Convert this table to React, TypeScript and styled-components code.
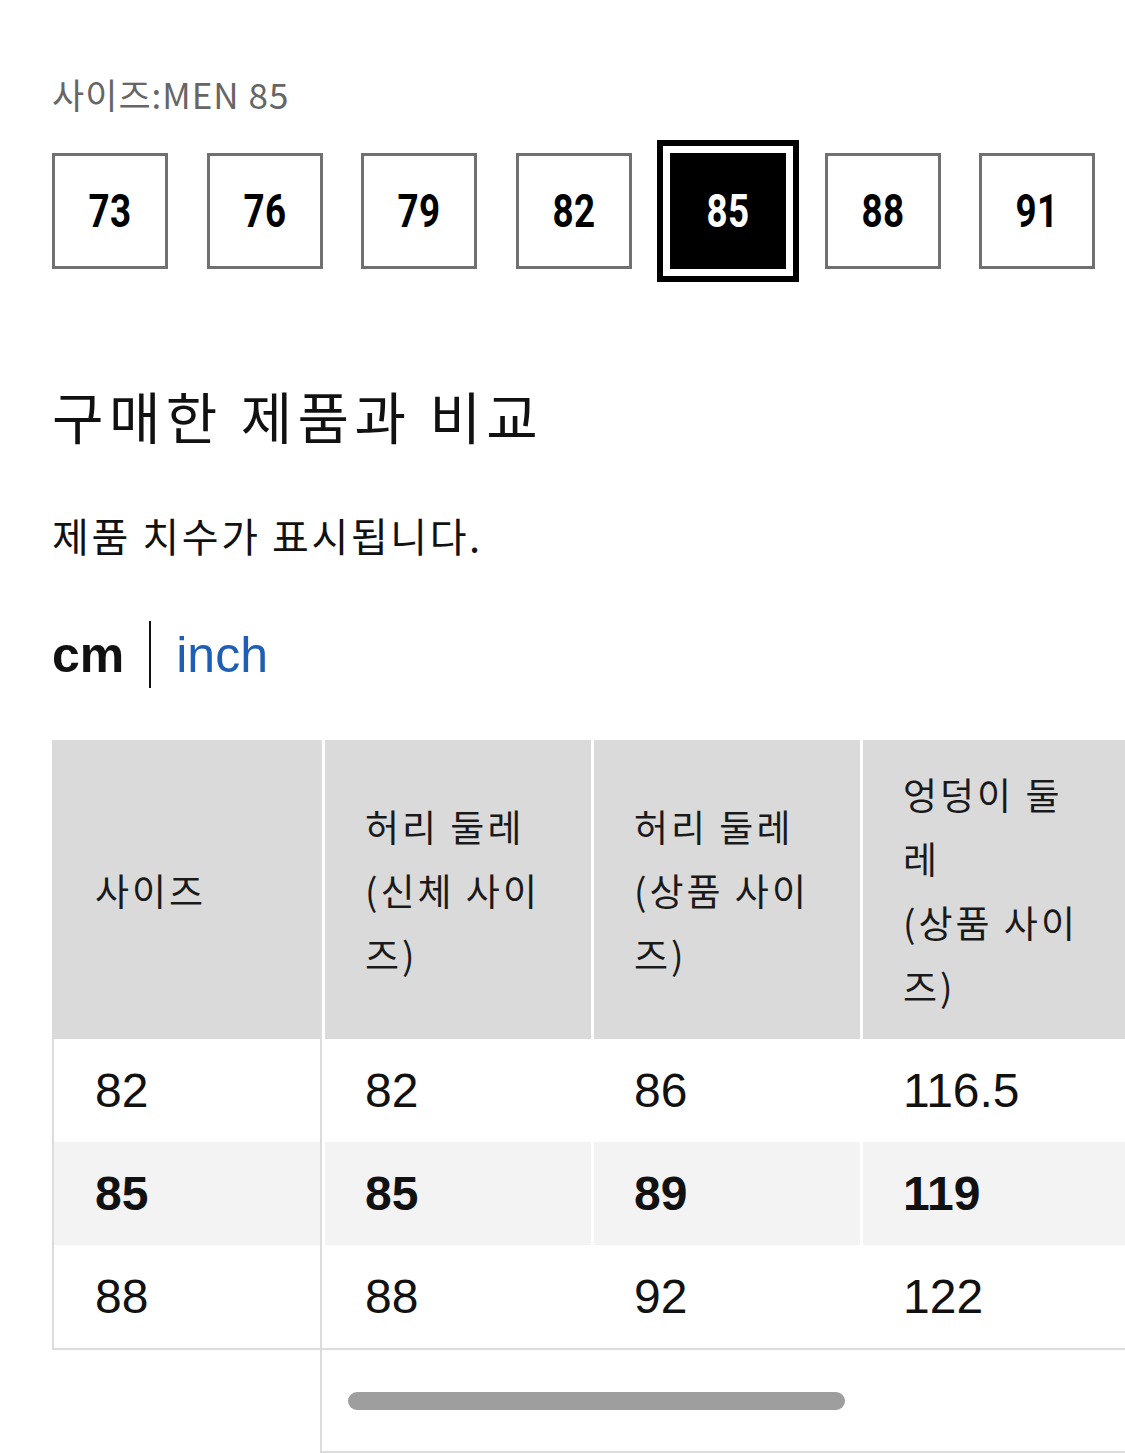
import React from "react";
import styled, { createGlobalStyle } from "styled-components";

const Global = createGlobalStyle`
  html, body {
    margin: 0;
    padding: 0;
    background: #ffffff;
    overflow-x: hidden;
  }
  body {
    font-family: "Noto Sans CJK KR", "Noto Sans", sans-serif;
    color: #111111;
  }
`;

const KR = `"Noto Sans CJK KR", "Noto Sans", sans-serif`;
const LATIN = `"Liberation Sans", Arial, sans-serif`;

const Page = styled.div`
  padding: 74px 0 0 52px;
  box-sizing: border-box;
  width: 100%;
`;

const SizeLabel = styled.div`
  font-family: ${KR};
  font-size: 35px;
  line-height: 40px;
  letter-spacing: 1px;
  color: #666666;
  font-weight: 400;
`;

const SizeRow = styled.div`
  margin-top: 39px;
  width: 1043px;
  display: flex;
  justify-content: space-between;
`;

const SizeBox = styled.button<{ $active?: boolean }>`
  width: 116px;
  height: 116px;
  box-sizing: border-box;
  border: 3px solid ${(p) => (p.$active ? "#000000" : "#707070")};
  background: ${(p) => (p.$active ? "#000000" : "#ffffff")};
  color: ${(p) => (p.$active ? "#ffffff" : "#000000")};
  box-shadow: ${(p) =>
    p.$active ? "0 0 0 7px #ffffff, 0 0 0 13px #000000" : "none"};
  display: flex;
  align-items: center;
  justify-content: center;
  padding: 0;
  margin: 0;
  cursor: pointer;
`;

const SizeNum = styled.span`
  display: inline-block;
  font-family: Roboto, "Liberation Sans", sans-serif;
  font-weight: 700;
  font-size: 46px;
  line-height: 1;
  transform: scaleX(0.8);
  letter-spacing: 0.5px;
`;

const Heading = styled.h2`
  margin: 114px 0 0;
  font-family: ${KR};
  font-weight: 400;
  font-size: 56px;
  line-height: 64px;
  letter-spacing: 5.4px;
  color: #111111;
`;

const SubText = styled.p`
  margin: 64px 0 0;
  font-family: ${KR};
  font-weight: 400;
  font-size: 40px;
  line-height: 48px;
  letter-spacing: 2.6px;
  color: #111111;
`;

const UnitRow = styled.div`
  margin-top: 62px;
  height: 67px;
  display: flex;
  align-items: center;
  gap: 25px;
`;

const Unit = styled.span<{ $active?: boolean }>`
  font-family: ${LATIN};
  font-size: 50px;
  line-height: 1;
  font-weight: ${(p) => (p.$active ? 700 : 400)};
  color: ${(p) => (p.$active ? "#111111" : "#1c5fb4")};
  cursor: pointer;
`;

const UnitDivider = styled.span`
  width: 2px;
  height: 67px;
  background: #111111;
`;

const TableWrap = styled.div`
  margin-top: 52px;
  display: flex;
  align-items: flex-start;
  overflow: hidden;
`;

const FixedCol = styled.div`
  width: 268px;
  flex-shrink: 0;
  display: flex;
  flex-direction: column;
`;

const HeadCell = styled.div<{ $pad?: number }>`
  height: 299px;
  box-sizing: border-box;
  background: #dadada;
  padding: 0 42px 0 ${(p) => p.$pad ?? 40}px;
  display: flex;
  align-items: center;
  font-family: ${KR};
  font-size: 37px;
  line-height: 64px;
  letter-spacing: 3px;
  color: #1a1a1a;
`;

const BodyCell = styled.div<{ $alt?: boolean; $bold?: boolean; $edge?: boolean }>`
  height: 103px;
  box-sizing: border-box;
  background: ${(p) => (p.$alt ? "#f3f3f3" : "#ffffff")};
  border-left: ${(p) => (p.$edge ? "2px solid #dcdcdc" : "none")};
  padding-left: ${(p) => (p.$edge ? 41 : 40)}px;
  display: flex;
  align-items: center;
  font-family: ${LATIN};
  font-size: 48px;
  font-weight: ${(p) => (p.$bold ? 700 : 400)};
  color: #111111;
`;

const FixedBody = styled.div`
  border-bottom: 2px solid #dcdcdc;
  display: flex;
  flex-direction: column;
`;

const ScrollArea = styled.div`
  flex: 1;
  min-width: 0;
  border-left: 2px solid #dcdcdc;
  border-bottom: 2px solid #dcdcdc;
  overflow: hidden;
`;

const ScrollGrid = styled.div`
  display: grid;
  grid-template-columns: repeat(3, 266px);
  column-gap: 3px;
  padding-left: 3px;
  width: max-content;
  border-bottom: 2px solid #dcdcdc;
`;

const ScrollTrack = styled.div`
  height: 101px;
  padding-left: 26px;
  display: flex;
  align-items: center;
`;

const Thumb = styled.div`
  width: 497px;
  height: 18px;
  border-radius: 9px;
  background: #9e9e9e;
`;

const sizes = [73, 76, 79, 82, 85, 88, 91];

const headers: React.ReactNode[] = [
  <>허리 둘레<br />(신체 사이즈)</>,
  <>허리 둘레<br />(상품 사이즈)</>,
  <>엉덩이 둘레<br />(상품 사이즈)</>,
];

const rows = [
  { size: "82", values: ["82", "86", "116.5"], current: false },
  { size: "85", values: ["85", "89", "119"], current: true },
  { size: "88", values: ["88", "92", "122"], current: false },
];

export default function App() {
  return (
    <>
      <Global />
      <Page>
        <SizeLabel>사이즈:MEN 85</SizeLabel>
        <SizeRow>
          {sizes.map((s) => (
            <SizeBox key={s} $active={s === 85}>
              <SizeNum>{s}</SizeNum>
            </SizeBox>
          ))}
        </SizeRow>

        <Heading>구매한 제품과 비교</Heading>
        <SubText>제품 치수가 표시됩니다.</SubText>

        <UnitRow>
          <Unit $active>cm</Unit>
          <UnitDivider />
          <Unit>inch</Unit>
        </UnitRow>

        <TableWrap>
          <FixedCol>
            <HeadCell $pad={43}>사이즈</HeadCell>
            <FixedBody>
              {rows.map((r) => (
                <BodyCell key={r.size} $edge $alt={r.current} $bold={r.current}>
                  {r.size}
                </BodyCell>
              ))}
            </FixedBody>
          </FixedCol>
          <ScrollArea>
            <ScrollGrid>
              {headers.map((h, i) => (
                <HeadCell key={i}>
                  <div>{h}</div>
                </HeadCell>
              ))}
              {rows.map((r) =>
                r.values.map((v, i) => (
                  <BodyCell key={r.size + "-" + i} $alt={r.current} $bold={r.current}>
                    {v}
                  </BodyCell>
                ))
              )}
            </ScrollGrid>
            <ScrollTrack>
              <Thumb />
            </ScrollTrack>
          </ScrollArea>
        </TableWrap>
      </Page>
    </>
  );
}
